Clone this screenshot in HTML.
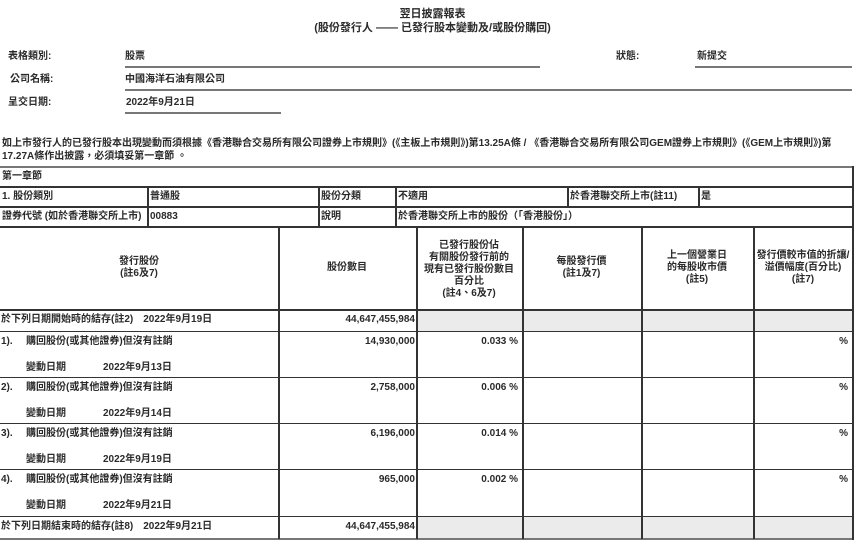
<!DOCTYPE html>
<html><head><meta charset="utf-8"><style>
*{margin:0;padding:0;box-sizing:border-box}
body{width:865px;height:547px;background:#fff;position:relative;overflow:hidden;font-family:"Liberation Sans","Noto Sans CJK TC",sans-serif;font-size:10px;color:#2a2a2a;font-weight:bold}
.a{position:absolute;white-space:nowrap;line-height:12px}
.h{position:absolute;background:#333;height:1px}
.hl{position:absolute;background:#777;height:2px}
.v{position:absolute;background:#333;width:1.5px}
.g{position:absolute;background:#ebebeb}
.c{text-align:center}
.r{text-align:right}
</style></head><body>
<div class="a c" style="left:0;width:865px;top:7px;font-size:11px;line-height:14px">翌日披露報表</div>
<div class="a c" style="left:0;width:865px;top:21px;font-size:11px;line-height:14px">(股份發行人 —— 已發行股本變動及/或股份購回)</div>

<div class="a" style="left:8px;top:51px">表格類別:</div>
<div class="a" style="left:125px;top:51px">股票</div>
<div class="hl" style="left:125px;width:415px;top:66px"></div>
<div class="a" style="left:616px;top:51px">狀態:</div>
<div class="a" style="left:697px;top:51px">新提交</div>
<div class="hl" style="left:695px;width:157px;top:66px"></div>
<div class="a" style="left:10px;top:74px">公司名稱:</div>
<div class="a" style="left:125px;top:74px">中國海洋石油有限公司</div>
<div class="hl" style="left:125px;width:727px;top:89px"></div>
<div class="a" style="left:8px;top:97px">呈交日期:</div>
<div class="a" style="left:126px;top:97px">2022年9月21日</div>
<div class="hl" style="left:125px;width:156px;top:112px"></div>

<div class="a" style="left:2px;top:138px">如上市發行人的已發行股本出現變動而須根據《香港聯合交易所有限公司證券上市規則》(《主板上市規則》)第13.25A條 / 《香港聯合交易所有限公司GEM證券上市規則》(《GEM上市規則》)第</div>
<div class="a" style="left:2px;top:151px">17.27A條作出披露，必須填妥第一章節 。</div>

<div class="g" style="left:417px;top:310px;width:436px;height:22px"></div>
<div class="g" style="left:417px;top:517px;width:436px;height:22px"></div>

<div class="hl" style="left:0;width:854px;top:166px"></div>
<div class="h" style="left:0;width:854px;top:186px;height:1.5px"></div>
<div class="h" style="left:0;width:854px;top:206px;height:1.5px"></div>
<div class="h" style="left:0;width:854px;top:226px;height:1.5px"></div>
<div class="h" style="left:0;width:854px;top:309px;height:1.5px"></div>
<div class="h" style="left:0;width:854px;top:331px"></div>
<div class="h" style="left:0;width:854px;top:377px"></div>
<div class="h" style="left:0;width:854px;top:423px"></div>
<div class="h" style="left:0;width:854px;top:469px"></div>
<div class="h" style="left:0;width:854px;top:516px"></div>
<div class="hl" style="left:0;width:854px;top:538px"></div>

<div class="v" style="left:852px;top:166px;height:374px"></div>
<div class="v" style="left:147px;top:186px;height:41px"></div>
<div class="v" style="left:318px;top:186px;height:41px"></div>
<div class="v" style="left:395px;top:186px;height:41px"></div>
<div class="v" style="left:567px;top:186px;height:21px"></div>
<div class="v" style="left:698px;top:186px;height:21px"></div>
<div class="v" style="left:278px;top:226px;height:313px"></div>
<div class="v" style="left:416px;top:226px;height:313px"></div>
<div class="v" style="left:522px;top:226px;height:313px"></div>
<div class="v" style="left:641px;top:226px;height:313px"></div>
<div class="v" style="left:753px;top:226px;height:313px"></div>

<div class="a" style="left:2px;top:171px">第一章節</div>
<div class="a" style="left:2px;top:191px">1. 股份類別</div>
<div class="a" style="left:150px;top:191px">普通股</div>
<div class="a" style="left:321px;top:191px">股份分類</div>
<div class="a" style="left:398px;top:191px">不適用</div>
<div class="a" style="left:570px;top:191px">於香港聯交所上市(註11)</div>
<div class="a" style="left:701px;top:191px">是</div>
<div class="a" style="left:2px;top:211px">證券代號 (如於香港聯交所上市)</div>
<div class="a" style="left:150px;top:211px">00883</div>
<div class="a" style="left:321px;top:211px">說明</div>
<div class="a" style="left:398px;top:211px">於香港聯交所上市的股份（「香港股份」）</div>

<div class="a c" style="left:0;width:278px;top:256px">發行股份<br>(註6及7)</div>
<div class="a c" style="left:278px;width:138px;top:262px">股份數目</div>
<div class="a c" style="left:416px;width:106px;top:240px">已發行股份佔<br>有關股份發行前的<br>現有已發行股份數目<br>百分比<br>(註4、6及7)</div>
<div class="a c" style="left:522px;width:119px;top:256px">每股發行價<br>(註1及7)</div>
<div class="a c" style="left:641px;width:112px;top:250px">上一個營業日<br>的每股收市價<br>(註5)</div>
<div class="a c" style="left:753px;width:100px;top:250px">發行價較市值的折讓/<br>溢價幅度(百分比)<br>(註7)</div>

<div class="a" style="left:1px;top:314px">於下列日期開始時的結存(註2)　2022年9月19日</div>
<div class="a r" style="left:278px;width:137px;top:314px">44,647,455,984</div>

<div class="a" style="left:1px;top:336px">1).</div><div class="a" style="left:26px;top:336px">購回股份(或其他證券)但沒有註銷</div>
<div class="a" style="left:26px;top:362px">變動日期</div><div class="a" style="left:103px;top:362px">2022年9月13日</div>
<div class="a r" style="left:278px;width:137px;top:336px">14,930,000</div>
<div class="a r" style="left:416px;width:102px;top:336px">0.033 %</div>
<div class="a r" style="left:753px;width:95px;top:336px">%</div>

<div class="a" style="left:1px;top:382px">2).</div><div class="a" style="left:26px;top:382px">購回股份(或其他證券)但沒有註銷</div>
<div class="a" style="left:26px;top:408px">變動日期</div><div class="a" style="left:103px;top:408px">2022年9月14日</div>
<div class="a r" style="left:278px;width:137px;top:382px">2,758,000</div>
<div class="a r" style="left:416px;width:102px;top:382px">0.006 %</div>
<div class="a r" style="left:753px;width:95px;top:382px">%</div>

<div class="a" style="left:1px;top:428px">3).</div><div class="a" style="left:26px;top:428px">購回股份(或其他證券)但沒有註銷</div>
<div class="a" style="left:26px;top:454px">變動日期</div><div class="a" style="left:103px;top:454px">2022年9月19日</div>
<div class="a r" style="left:278px;width:137px;top:428px">6,196,000</div>
<div class="a r" style="left:416px;width:102px;top:428px">0.014 %</div>
<div class="a r" style="left:753px;width:95px;top:428px">%</div>

<div class="a" style="left:1px;top:474px">4).</div><div class="a" style="left:26px;top:474px">購回股份(或其他證券)但沒有註銷</div>
<div class="a" style="left:26px;top:500px">變動日期</div><div class="a" style="left:103px;top:500px">2022年9月21日</div>
<div class="a r" style="left:278px;width:137px;top:474px">965,000</div>
<div class="a r" style="left:416px;width:102px;top:474px">0.002 %</div>
<div class="a r" style="left:753px;width:95px;top:474px">%</div>

<div class="a" style="left:1px;top:521px">於下列日期結束時的結存(註8)　2022年9月21日</div>
<div class="a r" style="left:278px;width:137px;top:521px">44,647,455,984</div>
</body></html>
